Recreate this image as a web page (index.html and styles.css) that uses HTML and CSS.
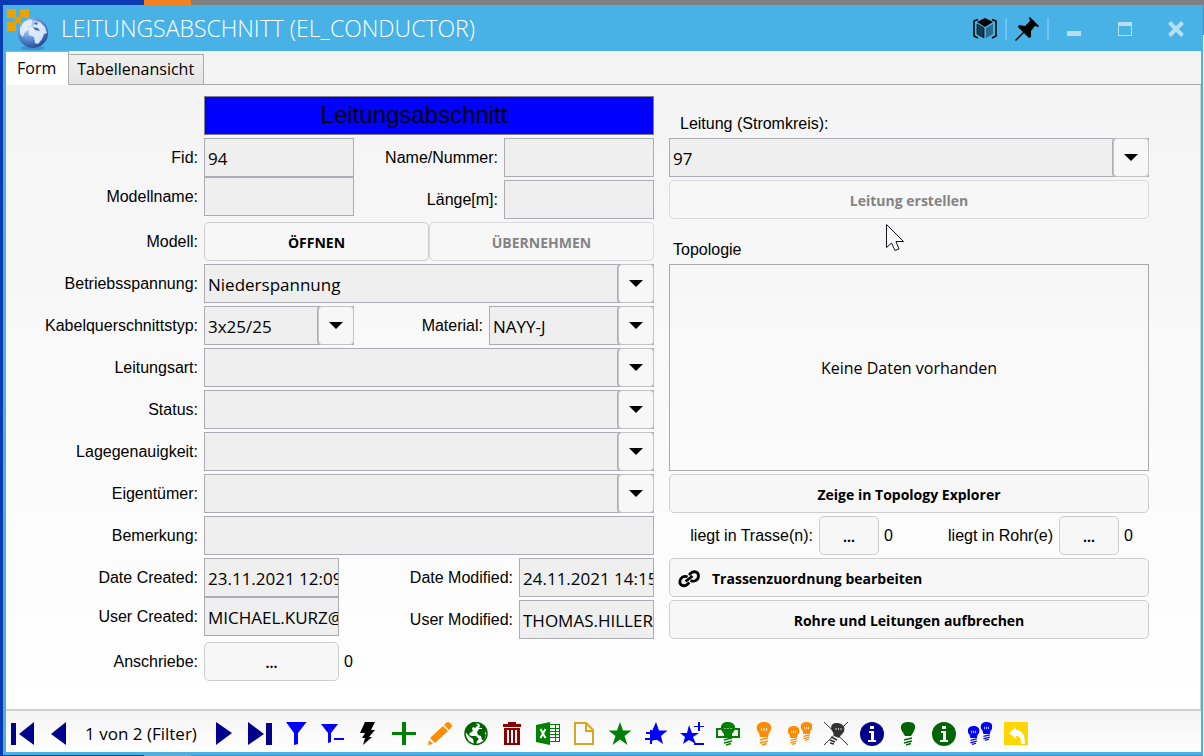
FILE: index.html
```html
<!DOCTYPE html>
<html lang="de">
<head>
<meta charset="utf-8">
<title>LEITUNGSABSCHNITT (EL_CONDUCTOR)</title>
<link rel="stylesheet" href="styles.css">
</head>
<body>
<main class="window">
  <header class="titlebar">
    <svg class="app-icon" viewBox="0 0 44 44" aria-hidden="true">
      <defs><radialGradient id="globe" cx=".38" cy=".3" r=".75"><stop offset="0" stop-color="#dcecff"/><stop offset=".45" stop-color="#6f9ce0"/><stop offset="1" stop-color="#1c4596"/></radialGradient></defs>
      <path fill="#eda200" d="M1 3h9v7l2 2 2-2V3h9v9h-7l-2 2 2 2h7v9h-9v-7l-2-2-2 2v7H1v-9h7l2-2-2-2H1z"/>
      <ellipse cx="27" cy="42" rx="12" ry="2" fill="#3c91c6"/>
      <circle cx="27" cy="27" r="15" fill="url(#globe)"/>
      <path fill="#e6f0ff" opacity=".9" d="M14 22l4-6 6-3 3 2-2 4-4 1 2 3-4 3-2 5-3-3zM28 15l6 1 5 5 2 6-3 1-2 5-4 5-3-1-1-6-5-2v-6l5-3z"/>
      <path fill="#4472bd" d="M27 21l5 1 2 3-5-1zM29 16l3 1-1 2-3-1z"/>
    </svg>
    <h1 class="title">LEITUNGSABSCHNITT (EL_CONDUCTOR)</h1>
    <div class="window-tools">
      <button class="tool" aria-label="3D"><svg viewBox="0 0 24 24"><path fill="none" stroke="#000" stroke-width="1.500" d="M5 2.500L1 4v15l4 2M19 2.500l4 1.500v15l-4 2"/><path d="M12 1l8 4-8 5-8-5z"/><path fill="#183b4d" stroke="#000" stroke-width=".7" d="M4 7l7 4v10l-7-4z"/><path fill="#286d8e" d="M20 7l-7 4v10l7-4z"/></svg></button>
      <span class="divider"></span>
      <button class="tool" aria-label="Anheften"><svg viewBox="0 0 24 24"><path d="M15 0l9 9-1 1-3-1-4 5v6l-2 1-5-5-8 8-1-1 8-8-5-5 1-2 6 1 5-5-1-3z"/></svg></button>
      <span class="divider"></span>
    </div>
    <div class="window-controls">
      <button class="tool" aria-label="Minimieren"><svg viewBox="0 0 24 24"><path fill="#b6def5" d="M5 14h14v5H5z"/></svg></button>
      <button class="tool" aria-label="Maximieren"><svg viewBox="0 0 24 24"><path fill="#b6def5" fill-rule="evenodd" d="M5 5h14v14H5zM6 9v9h12V9z"/></svg></button>
      <button class="tool" aria-label="Schließen"><svg viewBox="0 0 24 24"><path stroke="#b6def5" stroke-width="4" d="M5.500 5.500l13 13M18.500 5.500l-13 13"/></svg></button>
    </div>
  </header>

  <nav class="tabs" role="tablist">
    <button class="tab tab-active" role="tab" aria-selected="true">Form</button>
    <button class="tab" role="tab" aria-selected="false">Tabellenansicht</button>
  </nav>

  <form class="form">
    <section class="column column-left">
      <div class="row"><h2 class="banner span-30 after-label">Leitungsabschnitt</h2></div>
      <div class="row">
        <div class="stack"><label class="label" for="fid">Fid:</label><label class="label" for="mname">Modellname:</label></div>
        <div class="stack span-10"><input class="field" id="fid" value="94"><input class="field" id="mname"></div>
        <div class="stack spaced span-10"><label class="label" for="name">Name/Nummer:</label><label class="label" for="len">Länge[m]:</label></div>
        <div class="stack spaced span-10"><input class="field" id="name"><input class="field" id="len"></div>
      </div>
      <div class="row">
        <span class="label">Modell:</span>
        <button type="button" class="button span-15">ÖFFNEN</button>
        <button type="button" class="button span-15" disabled>ÜBERNEHMEN</button>
      </div>
      <div class="row">
        <label class="label" for="volt">Betriebsspannung:</label>
        <div class="combo span-30"><select id="volt"><option>Niederspannung</option></select><span class="drop"></span></div>
      </div>
      <div class="row">
        <label class="label" for="cross">Kabelquerschnittstyp:</label>
        <div class="combo span-10"><select id="cross"><option>3x25/25</option></select><span class="drop"></span></div>
        <label class="label span-9" for="mat">Material:</label>
        <div class="combo span-11"><select id="mat"><option>NAYY-J</option></select><span class="drop"></span></div>
      </div>
      <div class="row">
        <label class="label" for="kind">Leitungsart:</label>
        <div class="combo span-30"><select id="kind"><option></option></select><span class="drop"></span></div>
      </div>
      <div class="row">
        <label class="label" for="status">Status:</label>
        <div class="combo span-30"><select id="status"><option></option></select><span class="drop"></span></div>
      </div>
      <div class="row">
        <label class="label" for="acc">Lagegenauigkeit:</label>
        <div class="combo span-30"><select id="acc"><option></option></select><span class="drop"></span></div>
      </div>
      <div class="row">
        <label class="label" for="owner">Eigentümer:</label>
        <div class="combo span-30"><select id="owner"><option></option></select><span class="drop"></span></div>
      </div>
      <div class="row">
        <label class="label" for="note">Bemerkung:</label>
        <input class="field span-30" id="note">
      </div>
      <div class="row">
        <div class="stack"><label class="label" for="dc">Date Created:</label><label class="label" for="uc">User Created:</label></div>
        <div class="stack span-9"><input class="field" id="dc" value="23.11.2021 12:09"><input class="field" id="uc" value="MICHAEL.KURZ@"></div>
        <div class="stack spaced span-12"><label class="label" for="dm">Date Modified:</label><label class="label" for="um">User Modified:</label></div>
        <div class="stack spaced span-9"><input class="field" id="dm" value="24.11.2021 14:15"><input class="field" id="um" value="THOMAS.HILLER"></div>
      </div>
      <div class="row">
        <span class="label">Anschriebe:</span>
        <button type="button" class="button span-9">...</button>
        <output class="count span-3">0</output>
      </div>
    </section>

    <section class="column column-right">
      <label class="heading heading-low" for="circuit">Leitung (Stromkreis):</label>
      <div class="combo"><select id="circuit"><option>97</option></select><span class="drop"></span></div>
      <button type="button" class="button" disabled>Leitung erstellen</button>
      <h2 class="heading">Topologie</h2>
      <div class="topology">Keine Daten vorhanden</div>
      <button type="button" class="button">Zeige in Topology Explorer</button>
      <div class="links">
        <span class="label span-10">liegt in Trasse(n):</span>
        <button type="button" class="button span-4">...</button>
        <output class="count span-3">0</output>
        <span class="label span-9">liegt in Rohr(e)</span>
        <button type="button" class="button span-4">...</button>
        <output class="count span-2">0</output>
      </div>
      <button type="button" class="button button-icon">
        <svg class="chain" viewBox="0 0 22 18"><g fill="none" stroke="#000" stroke-width="2.800"><path d="M9.500 7C6 5 2 8 1.800 11.500c0 4.500 5 5.500 8 2.500l1.500-1.500M12.500 10.500c4 2 8-1 8-4.500 0-4.500-5-5.500-8-2.500L11 5"/><path d="M7.500 11.500l7-5.500"/></g></svg>
        Trassenzuordnung bearbeiten</button>
      <button type="button" class="button">Rohre und Leitungen aufbrechen</button>
    </section>
  </form>

  <footer class="toolbar">
    <button class="tool" aria-label="Erster"><svg viewBox="0 0 24 24"><path fill="#00008b" d="M1 1h5v22H1zM24 0v23L9 12z"/></svg></button>
    <button class="tool" aria-label="Zurück"><svg viewBox="0 0 24 24"><path fill="#00008b" d="M20 0v23L5 12z"/></svg></button>
    <span class="position">1 von 2 (Filter)</span>
    <button class="tool" aria-label="Weiter"><svg viewBox="0 0 24 24"><path fill="#00008b" d="M4 0v23l16-12z"/></svg></button>
    <button class="tool" aria-label="Letzter"><svg viewBox="0 0 24 24"><path fill="#00008b" d="M0 0v23l16-11zM18 1h6v22h-6z"/></svg></button>
    <button class="tool" aria-label="Filter"><svg viewBox="0 0 24 24"><path fill="#00f" d="M2 0h20.500L14 11v11l-4 1V11z"/></svg></button>
    <button class="tool" aria-label="Filter entfernen"><svg viewBox="0 0 24 24"><path fill="#00f" d="M1 2h17l-7 9v9l-3 1V11zM14 16h10v2H14z"/></svg></button>
    <button class="tool" aria-label="Ausführen"><svg viewBox="0 0 24 24"><path d="M9 0h10l-4 8h4l-6 7h3L7 23l2-7H6l3-5H4z"/></svg></button>
    <button class="tool" aria-label="Neu"><svg viewBox="0 0 24 24"><path fill="#008000" d="M10 0h4v10h10v3H14v10h-4V13H0v-3h10z"/></svg></button>
    <button class="tool" aria-label="Bearbeiten"><svg viewBox="0 0 24 24"><path fill="#ff8c00" d="M18 1q2-2 4 0l1 1q2 2 0 4l-2 2-5-5zM15 4l5 5L7 21l-5-5zM1 18l4 4-5 1z"/></svg></button>
    <button class="tool" aria-label="Karte"><svg viewBox="0 0 24 24"><circle cx="12" cy="11.500" r="11" fill="#fff" stroke="#006400" stroke-width="1.500"/><path fill="#006400" d="M1 9l3-6 5-3 4 0-1 2 2 1-3 3-2-1-1 2 1 2-3 2-1 2 3 1 4 0 3 3-2 2-1 4-2-1-1-5-3-2-3-3zM15 1l6 3 2 5-1 0-1 3 1 1-2 5-2 0-1-4-3-1-1-3 2-3 3 0 0-1-3 0 1-2z"/></svg></button>
    <button class="tool" aria-label="Löschen"><svg viewBox="0 0 24 24"><path fill="#8b0000" fill-rule="evenodd" d="M8 0h8v2h5v3H3V2h5zM4 6h16v17H4zM7 8v13h2V8zm4 0v13h2V8zm4 0v13h2V8z"/></svg></button>
    <button class="tool" aria-label="Excel-Export"><svg viewBox="0 0 24 24"><path fill="#008000" d="M0 3l14-3v23L0 20zM14 2h10v18H14v-1h9V3h-9z"/><path stroke="#008000" d="M14 6.500h10M14 9.500h10M14 12.500h10M14 15.500h10M19.500 3v17"/><path fill="none" stroke="#fff" stroke-width="2" d="M4.500 7l5 9M9.500 7l-5 9"/></svg></button>
    <button class="tool" aria-label="Dokument"><svg viewBox="0 0 24 24"><path fill="none" stroke="#daa520" stroke-width="2" d="M3 1h11l7 7v14H3zM14 1v8h7"/></svg></button>
    <button class="tool" aria-label="Favorit"><svg viewBox="0 0 24 24"><path fill="#008000" d="M12 0l3 8.500h8.500L16.500 14l3 9-7.500-5.500L4.500 23l3-9L.5 8.500H9z"/></svg></button>
    <button class="tool" aria-label="Favorit hinzufügen"><svg viewBox="0 0 24 24"><path fill="#00f" d="M12 0l3 8.500h8.500L17 14l2 8-7-5-4 2V9z"/><path fill="none" stroke="#00f" stroke-width="2" d="M2 11h11M7 8v14M1 17h12M10 8v8"/></svg></button>
    <button class="tool" aria-label="Favoriten ändern"><svg viewBox="0 0 24 24"><path fill="#00f" d="M9 3l3 8h7l-6 4 3 7-7-4-6 4 2-7-5-4h7zM18 0h2v4h4v1h-4v4h-2V5h-4V4h4zM14 21h10v2H14z"/></svg></button>
    <button class="tool" aria-label="Karte hervorheben"><svg viewBox="0 0 24 24"><path fill="none" stroke="#008000" stroke-width="2" d="M1 7h22v8H1z"/><path fill="#008000" d="M12 0C3 0 4 8 8 12v3h8v-3c5-5 4-12-4-12z"/><path stroke="#008000" stroke-width="1.500" d="M8 18l8-2M8 21l8-2M10 23l5-1.500"/><path stroke="#fff" stroke-opacity=".5" stroke-dasharray="2 1" d="M8 6.500h9"/></svg></button>
    <button class="tool" aria-label="Hervorheben"><svg viewBox="0 0 24 24"><g id="bulb-lit"><path fill="#ff8c00" d="M12 0C4 0 3 7 7 11l1 4h8l1-4c4-4 3-11-5-11z"/><path stroke="#ff8c00" stroke-width="1.500" d="M8 18l8-2M8 21l8-2M10 23l5-1.500"/><path stroke="#fff" d="M9.500 6v3M12 6v3M14.500 6v3"/></g></svg></button>
    <button class="tool" aria-label="Alle hervorheben"><svg viewBox="0 0 24 24"><use href="#bulb-lit" transform="translate(-4 4) scale(.8)"/><use href="#bulb-lit" transform="translate(9 0) scale(.8)"/></svg></button>
    <button class="tool" aria-label="Hervorhebung aus"><svg viewBox="0 0 24 24"><path fill="#333" d="M14 1c-8-1-8 6-5 9l1 4 5 2 2-3c5-3 5-11-3-12z"/><path stroke="#333" stroke-width="1.500" d="M7 15l6 3M6 18l5 2M6 21l4 1"/><path stroke="#333" d="M0 0l24 23M24 0L0 23"/><path stroke="#ccc" d="M12 6v2M14.500 6v2M17 6v2"/></svg></button>
    <button class="tool" aria-label="Info"><svg viewBox="0 0 24 24"><circle cx="12" cy="12" r="12" fill="#00008b"/><path fill="#fff" d="M10 4h4v3h-4zM9 9h5v9h2v2H8v-2h3v-7H9z"/></svg></button>
    <button class="tool" aria-label="Markieren"><svg viewBox="0 0 24 24"><path fill="#006400" d="M12 0C4 0 4 6 6 9l3 5h6l3-5c2-4 2-9-6-9z"/><path stroke="#006400" stroke-width="1.500" d="M8 18l8-2M8 21l8-2M10 23l5-1.500"/></svg></button>
    <button class="tool" aria-label="Objektinfo"><svg viewBox="0 0 24 24"><circle cx="12" cy="12" r="12" fill="#006400"/><path fill="#fff" d="M10 4h4v3h-4zM9 9h5v9h2v2H8v-2h3v-7H9z"/></svg></button>
    <button class="tool" aria-label="Beide markieren"><svg viewBox="0 0 24 24"><g id="bulb-blue" transform="translate(-4 4) scale(.8)"><path fill="#00f" d="M12 0C4 0 3 7 7 11l1 4h8l1-4c4-4 3-11-5-11z"/><path stroke="#00f" stroke-width="1.500" d="M8 18l8-2M8 21l8-2M10 23l5-1.500"/><path stroke="#fff" d="M9.500 6v3M12 6v3M14.500 6v3"/></g><use href="#bulb-blue" x="13" y="-4"/></svg></button>
    <button class="tool" aria-label="Rückgängig"><svg viewBox="0 0 24 24"><path fill="#ffd700" d="M0 0h24v23H0z"/><path fill="#fff" d="M5 11l7-6v3c6 0 9 5 9 14h-4c0-6-1-8-5-8v3z"/></svg></button>
  </footer>
</main>
<svg class="cursor" viewBox="0 0 19 28" aria-hidden="true"><path fill="#fff" stroke="#112" d="M.5.500v23l5-4.500L9 26.500l4-1.500-3-7.500h7.500z"/></svg>
</body>
</html>
```

FILE: styles.css
```css
* {
  box-sizing: border-box;
}

body {
  margin: 0;
  min-height: 100vh;
  padding: 5px 1px 1px 3px;
  display: flex;
  background:
    linear-gradient(#808080 35px, #f4f4f4 35px) right / 1px 100% no-repeat,
    linear-gradient(90deg, #0a3ab4 0 144px, #f58220 144px 191px, #808080 191px);
  font-family: "Open Sans", "Noto Sans", sans-serif;
  font-size: 17px;
  color: #000;
}

h1,
h2 {
  margin: 0;
  font-weight: 400;
}

button,
input,
select {
  margin: 0;
  font: inherit;
  color: inherit;
}

.window {
  flex: 1;
  min-width: 0;
  display: flex;
  flex-direction: column;
  border: solid #48b2e7;
  border-width: 0 2px 3px 3px;
  background: #f4f4f4;
}

.titlebar {
  display: flex;
  align-items: center;
  height: 46px;
  padding-right: 13px;
  background: #48b2e7;
}

.app-icon {
  width: 44px;
  height: 44px;
}

.title {
  flex: 1;
  padding-left: 11px;
  font-size: 23px;
  font-weight: 300;
  line-height: 48px;
  white-space: nowrap;
  color: #fff;
}

.window-tools {
  display: flex;
  align-items: center;
  gap: 8px;
  padding-top: 2px;
}

.divider {
  width: 2px;
  height: 22px;
  background: #70c3ee;
}

.window-controls {
  display: flex;
  gap: 27px;
  padding: 2px 0 0 13px;
}

.tool {
  width: 24px;
  height: 24px;
  padding: 0;
  border: 0;
  background: none;
}

.tool svg {
  display: block;
  width: 24px;
  height: 24px;
}

.tabs {
  display: flex;
  align-items: flex-end;
  height: 34px;
  border-bottom: 1px solid #a9a9a9;
}

.tab {
  height: 30px;
  padding: 0 7px;
  border: 1px solid #acacac;
  border-bottom: 0;
  border-left: 0;
  background: linear-gradient(#f0f0f0, #e5e5e5);
  font-size: 16px;
  line-height: 29px;
}

.tab:last-child {
  padding: 0 9px 0 8px;
}

.tab-active {
  height: 34px;
  margin-bottom: -1px;
  padding: 0 12px 0 11px;
  background: #fff;
}

.form {
  flex: 1;
  display: grid;
  grid-template-columns: 198px minmax(0, 450fr) minmax(0, 495fr);
  padding: 11px 51px 28px 0;
  border: 1px solid #d0d0d0;
  border-width: 0 1px 2px 0;
  background: linear-gradient(#f4f4f4, #fff);
}

.column {
  display: flex;
  flex-direction: column;
  gap: 3px;
}

.column-left {
  grid-column: 1 / 3;
}

.column-right {
  padding-left: 15px;
}

.row {
  display: grid;
  grid-template-columns: 198px repeat(30, minmax(0, 1fr));
}

.links {
  display: grid;
  grid-template-columns: repeat(32, minmax(0, 1fr));
}

.stack {
  display: flex;
  flex-direction: column;
  min-width: 0;
}

.spaced {
  gap: 3px;
}

.after-label { grid-column-start: 2; }
.span-2 { grid-column-end: span 2; }
.span-3 { grid-column-end: span 3; }
.span-4 { grid-column-end: span 4; }
.span-9 { grid-column-end: span 9; }
.span-10 { grid-column-end: span 10; }
.span-11 { grid-column-end: span 11; }
.span-12 { grid-column-end: span 12; }
.span-15 { grid-column-end: span 15; }
.span-30 { grid-column-end: span 30; }

.label,
.heading,
.banner,
.count {
  height: 39px;
  font-family: "Liberation Sans", Arial, sans-serif;
  font-size: 16px;
  line-height: 39px;
  white-space: nowrap;
}

.label {
  padding-right: 6px;
  text-align: right;
}

.count {
  padding-left: 5px;
}

.heading {
  padding: 8px 0 0 4px;
}

.heading-low {
  padding-left: 11px;
}

.banner {
  padding-right: 30px;
  border: 1px solid #808080;
  background: #00f;
  font-size: 24px;
  line-height: 36px;
  text-align: center;
}

.field,
.combo select {
  width: 100%;
  min-width: 0;
  height: 39px;
  padding: 2px 0 0 3px;
  border: 1px solid #abadb3;
  border-radius: 0;
  background: #efefef;
}

.combo {
  position: relative;
  min-width: 0;
}

.combo select {
  display: block;
  appearance: none;
}

.drop {
  position: absolute;
  inset: 0 0 0 auto;
  display: grid;
  place-items: center;
  width: 36px;
  border: 1px solid #c4c4c4;
  border-radius: 4px;
  background: #f7f7f7;
  box-shadow: -1px 0 #abadb3;
  pointer-events: none;
}

.drop::after {
  content: "";
  border: 7px solid transparent;
  border-top-color: #000;
  border-bottom: 0;
}

.button {
  height: 39px;
  min-width: 0;
  padding: 2px 8px 0;
  border: 1px solid #cdcdcd;
  border-radius: 5px;
  background: #f7f7f7;
  font-size: 14px;
  font-weight: 700;
  white-space: nowrap;
}

.button:disabled {
  border-color: #dadada;
  color: #838383;
}

.button-icon {
  display: flex;
  align-items: center;
  gap: 12px;
}

.chain {
  width: 22px;
  height: 18px;
}

.topology {
  display: grid;
  place-items: center;
  height: 207px;
  border: 1px solid #a9a9a9;
  font-size: 16px;
}

.toolbar {
  display: flex;
  align-items: center;
  gap: 12px;
  height: 41px;
  padding: 4px 4px 0;
  background: linear-gradient(#f4f4f4, #fff);
}

.position {
  min-width: 118px;
  text-align: center;
  white-space: nowrap;
}

.cursor {
  position: absolute;
  left: 886px;
  top: 224px;
  width: 19px;
  height: 28px;
}
```
